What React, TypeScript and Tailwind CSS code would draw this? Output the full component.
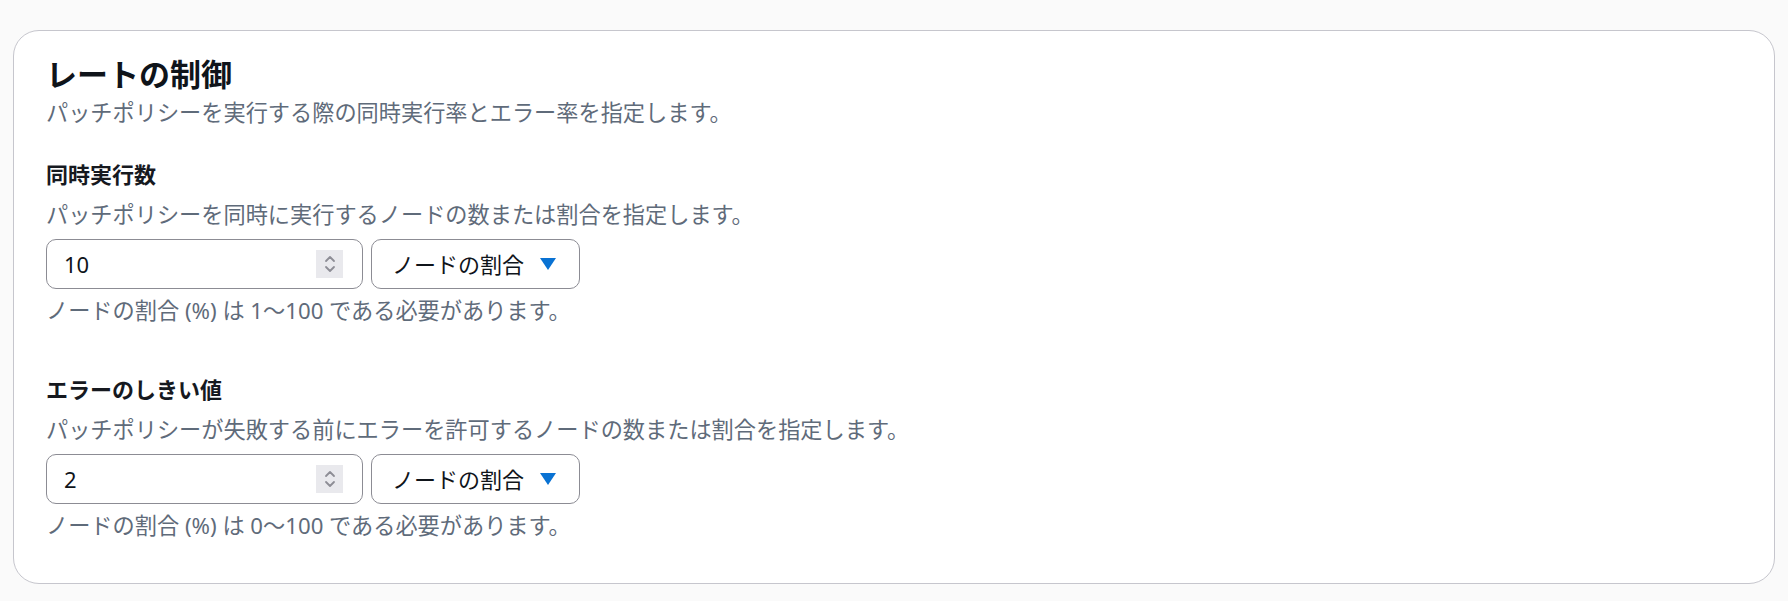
import React from "react";

const font = { fontFamily: '"Noto Sans", "Noto Sans CJK JP", sans-serif' };

function Spinner() {
  return (
    <div className="flex h-[28px] w-[27px] flex-col items-center justify-center bg-[#e9e9ed]">
      <svg width="14" height="22" viewBox="0 0 14 22" fill="none">
        <path d="M3 8 L7 4 L11 8" stroke="#8d8d95" strokeWidth="1.8" strokeLinecap="round" strokeLinejoin="round" />
        <path d="M3 14 L7 18 L11 14" stroke="#8d8d95" strokeWidth="1.8" strokeLinecap="round" strokeLinejoin="round" />
      </svg>
    </div>
  );
}

function Field({ label, desc, value, help }: { label: string; desc: string; value: string; help: string }) {
  return (
    <div className="flex flex-col">
      <div className="text-[22px] font-bold leading-[28px] text-[#16191f]">{label}</div>
      <div className="mt-[13px] text-[22.2px] leading-[28px] text-[#5f6b7a]">{desc}</div>
      <div className="mt-[10px] flex gap-[8px]">
        <div className="flex h-[50px] w-[317px] items-center justify-between rounded-[10px] border border-[#8c8c94] pl-[17px] pr-[19px]">
          <span className="text-[22px] text-[#0f141a]">{value}</span>
          <Spinner />
        </div>
        <div className="flex h-[50px] w-[209px] items-center justify-between rounded-[10px] border border-[#8c8c94] pl-[20px] pr-[22px]">
          <span className="text-[22px] text-[#0f141a]">ノードの割合</span>
          <svg width="18" height="14" viewBox="0 0 18 14">
            <path d="M1 1 L17 1 L9 13 Z" fill="#0972d3" />
          </svg>
        </div>
      </div>
      <div className="mt-[8px] text-[22.2px] leading-[28px] text-[#5f6b7a]">{help}</div>
    </div>
  );
}

export default function App() {
  return (
    <div className="h-[601px] w-full bg-[#fafafa] px-[13px] pt-[30px]" style={font}>
      <div className="h-[554px] rounded-[26px] border border-[#c6c6cd] bg-white pl-[32px] pt-[25px]">
        <h1 className="text-[31px] font-bold leading-[36px] text-[#0f141a]">レートの制御</h1>
        <p className="mt-[7px] text-[22.2px] leading-[28px] text-[#5f6b7a]">
          パッチポリシーを実行する際の同時実行率とエラー率を指定します。
        </p>
        <div className="mt-[33px]">
          <Field
            label="同時実行数"
            desc="パッチポリシーを同時に実行するノードの数または割合を指定します。"
            value="10"
            help="ノードの割合 (%) は 1〜100 である必要があります。"
          />
        </div>
        <div className="mt-[50px]">
          <Field
            label="エラーのしきい値"
            desc="パッチポリシーが失敗する前にエラーを許可するノードの数または割合を指定します。"
            value="2"
            help="ノードの割合 (%) は 0〜100 である必要があります。"
          />
        </div>
      </div>
    </div>
  );
}
